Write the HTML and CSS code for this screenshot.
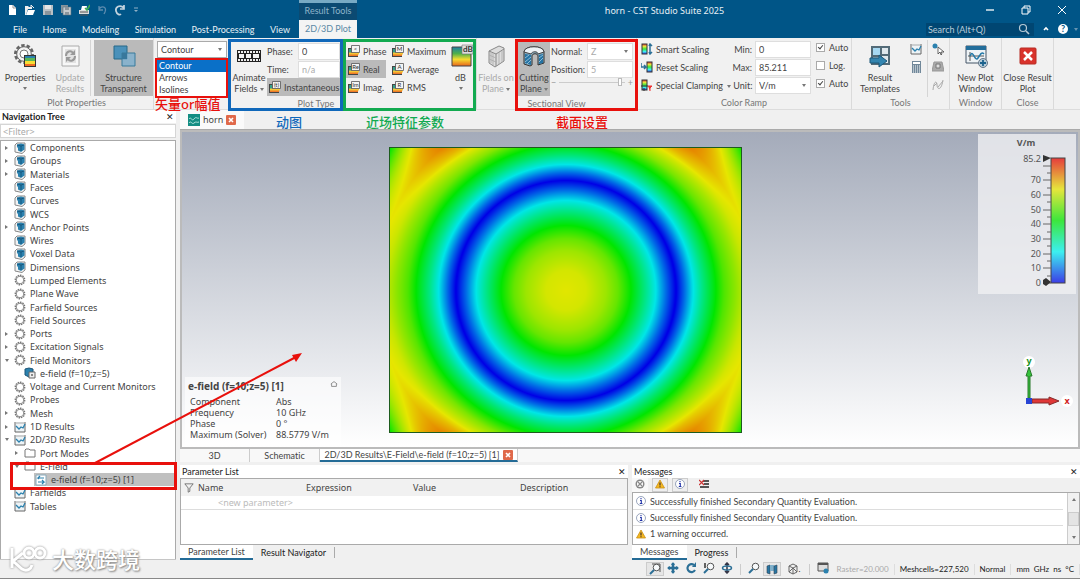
FILE: index.html
```html
<!DOCTYPE html>
<html lang="en">

<head>
  <meta charset="UTF-8">
  <meta name="viewport" content="width=device-width, initial-scale=1.0">
  <title>horn - CST Studio Suite 2025</title>
  <link rel="stylesheet" href="styles.css">
</head>

<body>
  <!-- shared icons -->
  <svg class="sprite" width="0" height="0">
    <defs>
      <linearGradient id="ramp" x1="0" y1="0" x2="0" y2="1">
        <stop offset="0" stop-color="#e63c3c" />
        <stop offset=".25" stop-color="#e6e63c" />
        <stop offset=".5" stop-color="#3ce63c" />
        <stop offset=".75" stop-color="#3cf0f0" />
        <stop offset="1" stop-color="#3c3ce6" />
      </linearGradient>
      <linearGradient id="dbramp" x1="0" y1="0" x2="0" y2="1">
        <stop offset="0" stop-color="#1d7fa6" />
        <stop offset=".35" stop-color="#4fb04a" />
        <stop offset=".65" stop-color="#f4dc30" />
        <stop offset="1" stop-color="#e8641b" />
      </linearGradient>
    </defs>
    <symbol id="cube" viewBox="0 0 12 12">
      <path d="M1 3l2-2h8v8l-3 2.500-7-1.500z" fill="#f4f4f4" stroke="#888" />
      <path d="M3 2.500l4-1 3.500 1v5L7 10 4 8.500V6L3 5z" fill="#2b81ae" />
      <path d="M3 3l4 1 3-1M7 4v5" stroke="#124e72" fill="none" stroke-width=".8" />
    </symbol>
    <symbol id="gear" viewBox="0 0 12 12">
      <circle cx="6" cy="6" r="4.700" fill="none" stroke="#777" stroke-width="1.400" stroke-dasharray="1.500 .9" />
      <circle cx="6" cy="6" r="3.800" fill="#fff" stroke="#888" stroke-width="1" />
    </symbol>
    <symbol id="chart" viewBox="0 0 12 12">
      <path d="M1 1v10h10V1" fill="#edf3f6" stroke="#666" />
      <path d="M1 2h10" stroke="#aaa" />
      <path d="M2 5l3 3 2-2 2 1 2-4" fill="none" stroke="#2b81ae" stroke-width="1.300" />
    </symbol>
    <symbol id="folder" viewBox="0 0 12 12">
      <path d="M1 10V3l1-1h3l1 1h5v7z" fill="#fff" stroke="#777" />
    </symbol>
    <symbol id="monitor" viewBox="0 0 12 12">
      <path d="M1 2l4-1 4 1v7l-4 1-4-2z" fill="#2b81ae" stroke="#1a5578" />
      <path d="M5 5h6v6H5z" fill="#eee" stroke="#666" />
      <path d="M7 9V7h2v2z" fill="#888" />
    </symbol>
    <symbol id="field" viewBox="0 0 12 12">
      <path d="M1 1h10v10H1z" fill="#fff" stroke="#8ab" />
      <path d="M9 4H3l2-2M3 4l1 1M3 8h6L7 6M9 8l-2 2" fill="none" stroke="#2b81ae" stroke-width="1.200" />
    </symbol>
    <symbol id="stack" viewBox="0 0 12 12">
      <path d="M0 3h4v9H0z" fill="#444" />
      <path d="M1 4h2v4H1z" fill="#35a08c" />
      <path d="M0 11.500h10" stroke="#444" />
      <path d="M1 9h9v2H1z" fill="#ee7b28" />
      <path d="M1 7.500h10v2H1z" fill="#f5c736" />
      <path d="M3.500 .5h8v7h-8z" fill="#f4f4f4" stroke="#555" stroke-width=".8" />
    </symbol>
    <symbol id="close" viewBox="0 0 10 10">
      <rect width="10" height="10" rx="1" fill="#e0694a" />
      <path d="M3 3l4 4M7 3L3 7" stroke="#fff" stroke-width="1.600" />
    </symbol>
    <symbol id="info" viewBox="0 0 10 10">
      <circle cx="5" cy="5" r="4.500" fill="#fff" stroke="#8291ad" stroke-width=".8" />
      <path d="M4 4.500h1.300v3M3.800 7.500h2.600M5 2v1.300" stroke="#2133a8" stroke-width="1.100" fill="none" />
    </symbol>
    <symbol id="warn" viewBox="0 0 10 10">
      <path d="M5 1l4.500 8h-9z" fill="#f5b81f" stroke="#c98f16" stroke-width=".8" />
      <path d="M5 3.500v3M5 7.200v1" stroke="#433" stroke-width="1.200" />
    </symbol>
    <symbol id="lens" viewBox="0 0 12 12">
      <circle cx="7.500" cy="4.500" r="3.300" fill="#f7fafc" stroke="#555" />
      <path d="M5 7l-4 4" stroke="#2b6f96" stroke-width="2" />
    </symbol>
    <symbol id="scale" viewBox="0 0 12 12">
      <rect x="1" y="1" width="5" height="10" fill="url(#ramp)" stroke="#333" />
    </symbol>
  </svg>

  <header>
    <div class="titlebar">
      <div class="quick">
        <button type="button" aria-label="New"><svg viewBox="0 0 12 12"><path d="M3 1h4l3 3v7H3z" fill="#fff" /><path d="M7 1v3h3" fill="none" stroke="#999" /></svg></button>
        <button type="button" aria-label="Open"><svg viewBox="0 0 12 12"><path d="M1 2h3l1 1h3v2H4l-2 6H1z" fill="#eee" /><path d="M4 6h7l-2 5H2z" fill="#fff" /><path d="M7 4V1l3 3" stroke="#eee" fill="none" /></svg></button>
        <button type="button" aria-label="Save"><svg viewBox="0 0 12 12"><path d="M1 1h10v10H1z" fill="#b9c0c5" /><path d="M3 1h6v4H3z" fill="#e5e5e5" /><path d="M3 7h6v4H3z" fill="#8b959c" /></svg></button>
        <button type="button" aria-label="Save all"><svg viewBox="0 0 12 12"><path d="M1 1h7v8H1z" fill="#87949c" /><path d="M3 3h8v8H3z" fill="#c5cacd" stroke="#56707f" stroke-width=".6" /><path d="M5 3h4v3H5zM5 8h4v3H5z" fill="#8b959c" /></svg></button>
        <button type="button" aria-label="Print"><svg viewBox="0 0 12 12"><path d="M1 6h10v4H1z" fill="#ddd" /><path d="M3 6l1-4h5l-1 4z" fill="#fff" /><path d="M7 4l2 2 3-5" stroke="#3cac4d" stroke-width="1.500" fill="none" /><path d="M2 11h8M2 8h8" stroke="#555" /></svg></button>
        <button type="button" aria-label="Undo"><svg viewBox="0 0 12 12"><path d="M3 2v4h4M3 5c3-4 8-2 6 3L8 10" fill="none" stroke="#5d8caf" stroke-width="1.300" /></svg></button>
        <button type="button" aria-label="Redo"><svg viewBox="0 0 12 12"><path d="M10 1v4H6M10 4C6 0 1 3 2 7s4 4 5 3" fill="none" stroke="#c4d4df" stroke-width="1.700" /></svg></button>
        <button type="button" class="narrow" aria-label="Customize"><svg viewBox="0 0 12 12"><path d="M4 4h4" stroke="#8fb0c6" /><path d="M4 6h4L6 8z" fill="#8fb0c6" /></svg></button>
      </div>
      <div class="context">Result Tools</div>
      <h1>horn - CST Studio Suite 2025</h1>
      <div class="window-buttons">
        <button type="button" aria-label="Minimize"><svg viewBox="0 0 12 12"><path d="M2 6h8" stroke="#fff" stroke-width="1.300" /></svg></button>
        <button type="button" aria-label="Restore"><svg viewBox="0 0 12 12"><path d="M2 4h6v6H2zM4 4V2h6v6H8" fill="none" stroke="#fff" /></svg></button>
        <button type="button" aria-label="Close"><svg viewBox="0 0 12 12"><path d="M2 2l8 8M10 2l-8 8" stroke="#fff" /></svg></button>
      </div>
    </div>
    <nav class="menu">
      <div class="menu-items">
        <a href="#">File</a>
        <a href="#">Home</a>
        <a href="#">Modeling</a>
        <a href="#">Simulation</a>
        <a href="#">Post-Processing</a>
        <a href="#">View</a>
      </div>
      <a href="#" class="current">2D/3D Plot</a>
      <div class="search">
        <input type="text" placeholder="Search (Alt+Q)" aria-label="Search">
        <svg viewBox="0 0 12 12"><circle cx="5" cy="5" r="3.500" fill="none" stroke="#b7cad6" stroke-width="1.200" /><path d="M8 8l3 3" stroke="#b7cad6" stroke-width="1.600" /></svg>
      </div>
      <button type="button" aria-label="Collapse ribbon"><svg viewBox="0 0 12 12"><path d="M4 7l2-2 2 2" fill="none" stroke="#fff" stroke-width="1.600" /></svg></button>
      <button type="button" class="help" aria-label="Help">?</button>
      <i class="arrow pale"></i>
    </nav>
  </header>

  <section class="ribbon">
    <div class="group properties">
      <div class="tools">
        <button type="button" class="big">
          <svg viewBox="0 0 24 24"><circle cx="11" cy="10" r="8.500" fill="none" stroke="#666" stroke-width="3" stroke-dasharray="3.300 2" /><circle cx="11" cy="10" r="7.300" fill="#f4f4f4" stroke="#666" /><circle cx="11" cy="10" r="4" fill="#fff" stroke="#777" /><path d="M11 11h12v12H11z" fill="#333" /><path d="M12 12h10v2H12z" fill="#2b81ae" /><path d="M12 14h10v3H12z" fill="#59b757" /><path d="M12 17h10v3H12z" fill="#f7de35" /><path d="M12 20h10v2H12z" fill="#ef6d25" /></svg>
          <span>Properties</span><i class="arrow"></i>
        </button>
        <button type="button" class="big off">
          <svg viewBox="0 0 24 24"><path d="M4 2h17v20H4z" fill="#f7f7f7" stroke="#aaa" /><path d="M7 5h11v14H7z" fill="#e2e2e2" /><path d="M8 12c0-5 5-6 7-3M17 12c0 5-5 6-7 3" fill="none" stroke="#999" stroke-width="2" /><path d="M17 6v5h-5zM8 18v-5h5z" fill="#999" /></svg>
          <span>Update<br>Results</span>
        </button>
        <button type="button" class="big on transparent">
          <svg viewBox="0 0 24 24"><path d="M2 2h13v13H2z" fill="#4a91ba" stroke="#266888" /><path d="M10 9h13v13H10z" fill="#79afd0" fill-opacity=".75" stroke="#397a9b" /><path d="M10 9h5v6h-5z" fill="#38789c" /></svg>
          <span>Structure<br>Transparent</span>
        </button>
      </div>
      <h2>Plot Properties</h2>
    </div>

    <div class="group plot-type">
      <div class="tools">
        <div class="combo">
          <select aria-label="Plot style">
            <option>Contour</option>
            <option>Arrows</option>
            <option>Isolines</option>
          </select>
          <i class="arrow"></i>
          <ul class="options">
            <li class="picked">Contour</li>
            <li>Arrows</li>
            <li>Isolines</li>
          </ul>
        </div>
        <div class="marked blue">
          <button type="button" class="big">
            <svg viewBox="0 0 24 24"><path d="M0 6h24v12H0z" fill="#222" /><path d="M1 8h22M1 16h22" stroke="#eee" stroke-width="2" stroke-dasharray="2 1" /><path d="M2 10h5v4H2zM9 10h5v4H9zM16 10h6v4h-6z" fill="#f4f4f4" /></svg>
            <span>Animate<br>Fields <i class="arrow"></i></span>
          </button>
          <div class="fields">
            <label for="phase">Phase:</label><input id="phase" type="text" value="0">
            <label for="time">Time:</label><input id="time" type="text" value="n/a" disabled>
            <button type="button" class="small on wide"><svg viewBox="0 0 12 12"><use href="#stack" /><text x="7.500" y="6" class="mini">(t)</text></svg>Instantaneous</button>
          </div>
        </div>
        <div class="marked green">
          <div class="rows first">
            <button type="button" class="small"><svg viewBox="0 0 12 12"><use href="#stack" /><text x="7.500" y="6" class="mini">&lt;</text></svg>Phase</button>
            <button type="button" class="small on"><svg viewBox="0 0 12 12"><use href="#stack" /><text x="7.500" y="6" class="mini">Re</text></svg>Real</button>
            <button type="button" class="small"><svg viewBox="0 0 12 12"><use href="#stack" /><text x="7.500" y="6" class="mini">Im</text></svg>Imag.</button>
          </div>
          <div class="rows">
            <button type="button" class="small"><svg viewBox="0 0 12 12"><use href="#stack" /><text x="7.500" y="6" class="mini">M</text></svg>Maximum</button>
            <button type="button" class="small"><svg viewBox="0 0 12 12"><use href="#stack" /><text x="7.500" y="6" class="mini">A</text></svg>Average</button>
            <button type="button" class="small"><svg viewBox="0 0 12 12"><use href="#stack" /><text x="7.500" y="6" class="mini">R</text></svg>RMS</button>
          </div>
          <button type="button" class="big">
            <svg viewBox="0 0 24 24"><path d="M3 3h19v19H3z" fill="url(#dbramp)" stroke="#444" /><path d="M13 1h11v9H13z" fill="#ddd" stroke="#777" stroke-width=".6" /><text x="14" y="8" font-size="8" font-weight="bold" fill="#333">dB</text></svg>
            <span>dB</span><i class="arrow"></i>
          </button>
        </div>
      </div>
      <h2>Plot Type</h2>
    </div>

    <div class="group sectional">
      <div class="tools">
        <button type="button" class="big off">
          <svg viewBox="0 0 24 24"><path d="M5 7l10-5 5 2v13l-9 6-6-4z" fill="#ddd" stroke="#888" /><path d="M5 7l7 3v12M12 10l8-5" fill="none" stroke="#888" /><path d="M7 8v11M9 9v12M5 11l7 3M5 15l7 3M15 8v12M18 7v11" stroke="#aaa" stroke-width=".8" /></svg>
          <span>Fields on<br>Plane <i class="arrow"></i></span>
        </button>
        <div class="marked red">
          <button type="button" class="big on cutting">
            <svg viewBox="0 0 24 24"><path d="M2 8c0-7 20-7 20 0v11l-6 2V12c0-3-6-3-6 0v9l-2 1-6-2z" fill="#8badbf" stroke="#333" /><path d="M2 8c0-7 20-7 20 0l-6 2c0-3-6-3-7 0z" fill="#eef3f6" stroke="#444" /><path d="M3 10l6 1v10l-6-2zM17 11l4-1v9l-4 1z" fill="#2473a3" /><path d="M3 14l4-3M3 18l6-5M5 20l4-4M17 14l4-3M17 18l4-4" stroke="#a8cfe4" stroke-width=".8" /></svg>
            <span>Cutting<br>Plane <i class="arrow"></i></span>
          </button>
          <div class="fields section-fields">
            <label for="normal">Normal:</label>
            <div class="combo"><select id="normal" disabled><option>Z</option></select><i class="arrow"></i></div>
            <label for="position">Position:</label><input id="position" type="text" value="5" disabled>
            <div class="slider"><span>−</span><input type="range" value="95" aria-label="Position" disabled><span>+</span></div>
          </div>
        </div>
      </div>
      <h2>Sectional View</h2>
    </div>

    <div class="group color-ramp">
      <div class="tools">
        <div class="rows">
          <button type="button" class="small"><svg viewBox="0 0 12 12"><use href="#scale" /><path d="M9 2v8M8 3l1-2 2 2M8 9l1 2 2-2" stroke="#2b6f96" stroke-width="1.500" fill="none" /></svg>Smart Scaling</button>
          <button type="button" class="small"><svg viewBox="0 0 12 12"><use href="#scale" x="5" /><path d="M0 2v4h5L3 4M5 6L3 8" stroke="#2b6f96" stroke-width="1.500" fill="none" /></svg>Reset Scaling</button>
          <button type="button" class="small"><svg viewBox="0 0 12 12"><use href="#scale" /><path d="M0 7h7M3 9v3" stroke="#333" /><path d="M7 7h4L9 9v3" fill="#e33" stroke="#e33" /></svg>Special Clamping</button>
        </div>
        <div class="fields ramp-fields">
          <label for="min">Min:</label><input id="min" type="text" value="0">
          <label for="max">Max:</label><input id="max" type="text" value="85.211">
          <label for="unit"><i class="arrow"></i> Unit:</label>
          <div class="combo"><select id="unit"><option>V/m</option></select><i class="arrow"></i></div>
        </div>
        <div class="rows checks">
          <label><input type="checkbox" checked>Auto</label>
          <label><input type="checkbox">Log.</label>
          <label><input type="checkbox" checked>Auto</label>
        </div>
      </div>
      <h2>Color Ramp</h2>
    </div>

    <div class="group result-tools">
      <div class="tools">
        <button type="button" class="big">
          <svg viewBox="0 0 24 24"><path d="M3 2h19v19H3z" fill="#536b78" /><path d="M5 4h7v7H5z" fill="#a6d8f2" /><path d="M14 4h6v6h-6zM14 12h6v7h-6z" fill="#dfe8ed" /><path d="M5 13h7v6H5z" fill="#a9bdc8" /><path d="M2 14h9v-3l8 6-8 6v-4H2z" fill="#3385b0" stroke="#1c587b" /></svg>
          <span>Result<br>Templates</span>
        </button>
        <div class="rows icons">
          <button type="button" class="small" aria-label="Result curve"><svg><use href="#chart" /></svg></button>
          <button type="button" class="small" aria-label="Calculator"><svg viewBox="0 0 12 12"><path d="M2 0h9v12H2z" fill="#71889a" /><path d="M3 2h7" stroke="#fff" stroke-width="2" /><path d="M3 5h7M3 7h7M3 9h7M3 11h7" stroke="#fff" stroke-dasharray="1 1" /></svg></button>
        </div>
        <div class="rows icons divided">
          <button type="button" class="small" aria-label="Pick"><svg viewBox="0 0 12 12"><circle cx="3" cy="3" r="2.500" fill="#2b81ae" /><path d="M6 4v7l2-2 1 3 1-1-1-2h3z" fill="#fff" stroke="#444" stroke-width=".8" /></svg></button>
          <button type="button" class="small" aria-label="Bounding box"><svg viewBox="0 0 12 12"><path d="M2 1h8l2 9H0z" fill="#aaa" stroke="#999" /><path d="M4 3h4v4H4z" fill="#ddd" stroke="#777" /></svg></button>
          <button type="button" class="small" aria-label="Curve"><svg viewBox="0 0 12 12"><path d="M1 11C2 1 5 2 5 6s4 7 6-5M5 4l-3 3M6 8l5-6" fill="none" stroke="#aaa" /></svg></button>
        </div>
      </div>
      <h2>Tools</h2>
    </div>

    <div class="group single">
      <div class="tools">
        <button type="button" class="big">
          <svg viewBox="0 0 24 24"><path d="M2 2h20v17H2z" fill="#eef3f6" stroke="#456" /><path d="M2 2h20v4H2z" fill="#236e9b" /><path d="M4 12h16M6 8v9" stroke="#555" /><path d="M6 12c3-8 5 7 8 2s4-6 6-4" fill="none" stroke="#2379a8" stroke-width="1.500" /><circle cx="19" cy="19" r="4.500" fill="#b5cbd8" stroke="#678" /><path d="M19 16v6M16 19h6" stroke="#1d638d" stroke-width="1.800" /></svg>
          <span>New Plot<br>Window</span>
        </button>
      </div>
      <h2>Window</h2>
    </div>
    <div class="group single">
      <div class="tools">
        <button type="button" class="big">
          <svg viewBox="0 0 24 24"><rect x="4" y="4" width="16" height="16" rx="1" fill="#d9322b" stroke="#b72c24" /><path d="M8 8l8 8M16 8l-8 8" stroke="#fff" stroke-width="2.500" /></svg>
          <span>Close Result<br>Plot</span>
        </button>
      </div>
      <h2>Close</h2>
    </div>
  </section>

  <main>
    <aside>
      <div class="panel-title"><h2>Navigation Tree</h2><button type="button" aria-label="Close tree">✕</button></div>
      <input class="filter" type="text" placeholder="&lt;Filter&gt;" aria-label="Filter">
      <div class="tree-box">
        <ul class="tree">
          <li class="closed"><svg><use href="#cube" /></svg>Components</li>
          <li class="closed"><svg><use href="#cube" /></svg>Groups</li>
          <li class="closed"><svg><use href="#cube" /></svg>Materials</li>
          <li><svg><use href="#cube" /></svg>Faces</li>
          <li><svg><use href="#cube" /></svg>Curves</li>
          <li><svg><use href="#cube" /></svg>WCS</li>
          <li class="closed"><svg><use href="#cube" /></svg>Anchor Points</li>
          <li><svg><use href="#cube" /></svg>Wires</li>
          <li><svg><use href="#cube" /></svg>Voxel Data</li>
          <li><svg><use href="#cube" /></svg>Dimensions</li>
          <li><svg><use href="#gear" /></svg>Lumped Elements</li>
          <li><svg><use href="#gear" /></svg>Plane Wave</li>
          <li><svg><use href="#gear" /></svg>Farfield Sources</li>
          <li><svg><use href="#gear" /></svg>Field Sources</li>
          <li class="closed"><svg><use href="#gear" /></svg>Ports</li>
          <li class="closed"><svg><use href="#gear" /></svg>Excitation Signals</li>
          <li class="open"><svg><use href="#gear" /></svg>Field Monitors</li>
          <li class="level2"><svg><use href="#monitor" /></svg>e-field (f=10;z=5)</li>
          <li><svg><use href="#gear" /></svg>Voltage and Current Monitors</li>
          <li><svg><use href="#gear" /></svg>Probes</li>
          <li class="closed"><svg><use href="#gear" /></svg>Mesh</li>
          <li class="closed"><svg><use href="#chart" /></svg>1D Results</li>
          <li class="open"><svg><use href="#chart" /></svg>2D/3D Results</li>
          <li class="closed level2"><svg><use href="#folder" /></svg>Port Modes</li>
          <li class="open level2"><svg><use href="#folder" /></svg>E-Field</li>
          <li class="level3"><svg><use href="#field" /></svg>e-field (f=10;z=5) [1]</li>
          <li><svg><use href="#chart" /></svg>Farfields</li>
          <li><svg><use href="#chart" /></svg>Tables</li>
        </ul>
      </div>
    </aside>

    <div class="work">
      <div class="documents">
        <button type="button" class="document">
          <svg viewBox="0 0 12 12"><path d="M0 0h12v12H0z" fill="#148d83" /><path d="M1 5c2-3 3 3 5 0s3 0 5-1M1 9c2-3 3 2 5 0s3 0 5-1" fill="none" stroke="#b5e6df" /></svg>
          horn
          <svg class="x"><use href="#close" /></svg>
        </button>
      </div>

      <div class="plot">
        <div class="info">
          <h3>e-field (f=10;z=5) [1] <svg viewBox="0 0 10 8"><path d="M1 4l4-3 4 3M2 4v3h6V4" fill="none" stroke="#777" /></svg></h3>
          <dl>
            <dt>Component</dt><dd>Abs</dd>
            <dt>Frequency</dt><dd>10 GHz</dd>
            <dt>Phase</dt><dd>0 °</dd>
            <dt>Maximum (Solver)</dt><dd>88.5779 V/m</dd>
          </dl>
        </div>
        <canvas id="field-plot" width="353" height="286"></canvas>
        <div class="keys">
          <svg class="legend" viewBox="0 0 98 160">
            <text x="48" y="12" class="unit" text-anchor="middle">V/m</text>
            <rect x="73" y="24" width="14" height="125" fill="url(#ramp)" stroke="#444" />
            <g id="ticks"></g>
            <path d="M65 21l8 3-8 4z" fill="#333" />
            <path d="M65 146l3-2 5 4-5 4-3-2z" fill="#333" />
          </svg>
          <svg class="axes" viewBox="0 0 60 60">
            <circle cx="13" cy="8" r="6" fill="#fff" /><circle cx="51" cy="47" r="6" fill="#fff" />
            <path d="M12 44V22h-2l3-9 3 9h-2v22z" fill="#35c43c" stroke="#28782b" />
            <path d="M16 45h17v-2l10 4-10 4v-2H16z" fill="#df3737" stroke="#862b2b" />
            <rect x="10" y="44" width="6" height="6" fill="#2744d4" />
            <text x="13" y="10" text-anchor="middle" fill="#16911d">y</text>
            <text x="51" y="50" text-anchor="middle" fill="#d21f1f">x</text>
          </svg>
        </div>
      </div>

      <div class="views">
        <button type="button">3D</button>
        <button type="button">Schematic</button>
        <button type="button" class="selected">2D/3D Results\E-Field\e-field (f=10;z=5) [1] <svg><use href="#close" /></svg></button>
      </div>

      <div class="dock">
        <section class="parameters">
          <div class="panel-title"><h2>Parameter List</h2><button type="button" aria-label="Close parameters">✕</button></div>
          <div class="box">
            <table>
              <tr>
                <th scope="col"><svg viewBox="0 0 12 12"><path d="M1 1h10L7 6v4l-2 1V6z" fill="none" stroke="#666" /></svg>Name</th>
                <th scope="col">Expression</th>
                <th scope="col">Value</th>
                <th scope="col">Description</th>
              </tr>
              <tr>
                <td>&lt;new parameter&gt;</td>
                <td></td>
                <td></td>
                <td></td>
              </tr>
            </table>
          </div>
          <div class="tabs"><button type="button" class="selected">Parameter List</button><button type="button">Result Navigator</button></div>
        </section>

        <section class="messages">
          <div class="panel-title"><h2>Messages</h2><button type="button" aria-label="Close messages">✕</button></div>
          <div class="filters">
            <button type="button" aria-label="Errors"><svg viewBox="0 0 10 10"><circle cx="5" cy="5" r="4.500" fill="#888" /><circle cx="5" cy="5" r="3" fill="#fff" /><path d="M3 3l4 4M7 3L3 7" stroke="#888" stroke-width="1.200" /></svg></button>
            <button type="button" class="on" aria-label="Warnings"><svg><use href="#warn" /></svg></button>
            <button type="button" class="on" aria-label="Infos"><svg><use href="#info" /></svg></button>
            <button type="button" aria-label="Clear"><svg viewBox="0 0 10 10"><path d="M4 2h6M5 5h5M1 8h9" stroke="#222" stroke-width="1.500" /><path d="M0 1l5 5M5 1L0 6" stroke="#c33" stroke-width="1.200" /></svg></button>
          </div>
          <div class="box log">
            <ul>
              <li><svg><use href="#info" /></svg>Successfully finished Secondary Quantity Evaluation.</li>
              <li><svg><use href="#info" /></svg>Successfully finished Secondary Quantity Evaluation.</li>
              <li><svg><use href="#warn" /></svg>1 warning occurred.</li>
            </ul>
            <div class="scrollbar"><i class="arrow up"></i><span></span><i class="arrow"></i></div>
          </div>
          <div class="tabs"><button type="button" class="selected">Messages</button><button type="button">Progress</button></div>
        </section>
      </div>
    </div>
  </main>

  <footer>
    <button type="button" class="on" aria-label="Zoom window"><svg viewBox="0 0 12 12"><path d="M3 1h8v8" fill="none" stroke="#555" /><use href="#lens" /></svg></button>
    <button type="button" aria-label="Pan"><svg viewBox="0 0 12 12"><path d="M6 1v10M1 6h10" stroke="#2b6f96" stroke-width="2.500" /><path d="M6 0l2 3H4zM6 12l2-3H4zM0 6l3-2v4zM12 6L9 4v4z" fill="#2b6f96" /></svg></button>
    <button type="button" aria-label="Rotate"><svg viewBox="0 0 12 12"><path d="M9 3a4 4 0 1 0 1 5" fill="none" stroke="#2b6f96" stroke-width="2.200" /><path d="M7 5h4V0z" fill="#2b6f96" /></svg></button>
    <button type="button" aria-label="Dynamic zoom"><svg viewBox="0 0 12 12"><use href="#lens" /><path d="M2 1v5" stroke="#333" stroke-width="1.500" /></svg></button>
    <button type="button" aria-label="Rotate in plane"><svg viewBox="0 0 12 12"><path d="M6 1v10M4 3l2-2 2 2M4 9l2 2 2-2" fill="none" stroke="#334" stroke-width="1.500" /><ellipse cx="6" cy="6" rx="4.500" ry="2" fill="none" stroke="#2b6f96" stroke-width="1.500" /></svg></button>
    <hr>
    <button type="button" aria-label="Zoom"><svg><use href="#lens" /></svg></button>
    <button type="button" class="on" aria-label="Cutting plane"><svg viewBox="0 0 12 12"><path d="M1 3l3-1v9l-3-1z" fill="#2776a3" stroke="#345" stroke-width=".6" /><path d="M4 2h4v6H4z" fill="#7fb0cb" /><path d="M8 3l3-1v8l-3 1z" fill="#2776a3" stroke="#345" stroke-width=".6" /></svg></button>
    <button type="button" class="mode" aria-label="View mode"><svg viewBox="0 0 12 12"><path d="M2 3l4-2 4 2v6l-4 2-4-2zM2 3l4 2 4-2M6 5v6M2 9l4-4 4 4" fill="none" stroke="#666" /></svg>.</button>
    <hr>
    <button type="button" aria-label="Mesh settings"><svg viewBox="0 0 12 12"><path d="M1 1h10v8H1z" fill="#ddd" stroke="#555" /><path d="M1 2h10" stroke="#555" stroke-width="2" /><circle cx="9" cy="9" r="2.500" fill="#2b81ae" /></svg></button>
    <span class="off">Raster=20.000</span>
    <span>Meshcells=227,520</span>
    <span>Normal</span>
    <span class="units">mm&nbsp; GHz&nbsp; ns&nbsp; °C</span>
  </footer>

  <!-- notes laid over the window -->
  <p class="note style-note">矢量or幅值</p>
  <p class="note animate-note">动图</p>
  <p class="note values-note">近场特征参数</p>
  <p class="note section-note">截面设置</p>
  <svg class="pointer" viewBox="0 0 300 150">
    <path d="M85 112L286 6" stroke="#e8100c" stroke-width="2" />
    <path d="M292 2l-6 9-4-7z" fill="#e8100c" />
  </svg>
  <div class="tree-mark"></div>
  <div class="watermark">
    <svg viewBox="0 0 40 28"><path d="M3 3v20M14 8L4 16l9 8c5 3 9 0 10-4" fill="none" /><circle cx="20" cy="8" r="5" fill="none" /><circle cx="31" cy="8" r="5" fill="none" /></svg>
    大数跨境
  </div>

  <script>
    const canvas = document.querySelector('#field-plot');
    const ctx = canvas.getContext('2d');
    const w = canvas.width;
    const h = canvas.height;

    // [radius, relative amplitude]
    const profile = [
      [0, .745], [20, .73], [40, .67], [52, .61], [65, .5], [78, .37], [90, .25], [100, .12], [110, 0],
      [118, .12], [126, .25], [136, .38], [146, .5], [158, .65], [169, .75],
      [178, .84], [189, .93], [207, 1], [230, 1.08]
    ];
    const ramp = [[0, 0, 230], [0, 230, 230], [0, 230, 0], [230, 230, 0], [230, 0, 0]];

    function amplitude(x, y) {
      const r = Math.hypot(x, y);
      let i = 1;
      while (i < profile.length - 1 && profile[i][0] < r) i++;
      const [r0, v0] = profile[i - 1];
      const [r1, v1] = profile[i];
      const v = v0 + (v1 - v0) * (r - r0) / (r1 - r0);
      // the field drops again towards the side walls
      const wall = .58 * Math.pow(Math.abs(x) / 176, 6) * (.22 + .78 * Math.pow(Math.abs(y) / 143, 3));
      return Math.max(0, Math.min(.999, v - wall));
    }

    const image = ctx.createImageData(w, h);
    for (let y = 0; y < h; y++) {
      for (let x = 0; x < w; x++) {
        const v = amplitude(x - w / 2, y - h / 2) * 4;
        const n = Math.floor(v);
        const p = (y * w + x) * 4;
        for (let c = 0; c < 3; c++) {
          image.data[p + c] = ramp[n][c] + (ramp[n + 1][c] - ramp[n][c]) * (v - n);
        }
        image.data[p + 3] = 255;
      }
    }
    ctx.putImageData(image, 0, 0);
    ctx.strokeStyle = '#1d5c1d';
    ctx.strokeRect(.5, .5, w - 1, h - 1);

    // legend ticks
    let ticks = '<text x="63" y="28" text-anchor="end">85.2</text>';
    for (let v = 0; v <= 80; v += 5) {
      const y = Math.round(149 - v / 85.2 * 125);
      ticks += `<path d="M${v % 10 ? 69 : 65} ${y}H73" stroke="#666"/>`;
      if (v % 10 === 0 && v < 80) ticks += `<text x="63" y="${y + 3}" text-anchor="end">${v}</text>`;
    }
    document.querySelector('#ticks').innerHTML = ticks;
  </script>
</body>

</html>
```
FILE: styles.css
```css
* {
  box-sizing: border-box;
}

body {
  position: relative;
  display: flex;
  flex-direction: column;
  height: 100vh;
  margin: 0;
  overflow: hidden;
  background: #f0f0f0;
  color: #444;
  font: 9px/11px "Noto Sans", "Noto Sans CJK SC", sans-serif;
  font-variant-ligatures: none;
}

header,
.ribbon,
.panel-title,
.views,
.tabs,
.log,
footer {
  font-family: Lato, "Noto Sans", sans-serif;
}

h1,
h2,
h3,
p,
ul,
dl,
dd {
  margin: 0;
  padding: 0;
  font-size: inherit;
  font-weight: normal;
}

ul {
  list-style: none;
}

button,
input,
select {
  margin: 0;
  padding: 0;
  border: 0;
  background: none;
  color: inherit;
  font: inherit;
  font-variant-ligatures: none;
}

a {
  color: inherit;
  text-decoration: none;
}

svg {
  flex: none;
  width: 12px;
  height: 12px;
}

.sprite {
  position: absolute;
  width: 0;
  height: 0;
}

.arrow {
  display: inline-block;
  flex: none;
  border: 2px solid transparent;
  border-top: 3px solid #777;
  border-bottom: 0;
  vertical-align: middle;
}

.arrow.up {
  border-top: 0;
  border-bottom: 3px solid #777;
}

/* title bar and menu */
header {
  background: #005587;
  color: #e8f0f5;
}

.titlebar,
.menu {
  display: flex;
  align-items: center;
  height: 20px;
}

.menu {
  height: 18px;
}

.quick {
  display: flex;
  width: 299px;
  padding-left: 3px;
}

.quick button {
  width: 18px;
  height: 12px;
}

.quick .narrow {
  width: 14px;
}

.context {
  width: 58px;
  height: 20px;
  border-top: 3px solid #78aac4;
  background: #0b4a72;
  color: #8eb4ca;
  line-height: 16px;
  text-align: center;
}

h1 {
  flex: 1;
  font-family: "Noto Sans", sans-serif;
  text-align: center;
}

.window-buttons {
  display: flex;
}

.window-buttons button {
  width: 36px;
  height: 12px;
}

.menu-items {
  display: flex;
  justify-content: space-between;
  width: 299px;
  padding: 0 9px 0 13px;
}

.current {
  align-self: stretch;
  width: 58px;
  background: #f4f4f4;
  color: #5b88a5;
  line-height: 18px;
  text-align: center;
}

.search {
  display: flex;
  align-items: center;
  width: 108px;
  height: 13px;
  margin-left: auto;
  padding: 0 4px 0 2px;
  background: #004672;
}

.search input {
  flex: 1;
  min-width: 0;
}

.search input::placeholder {
  color: #b9cdd9;
}

.menu button {
  width: 12px;
  height: 12px;
  margin-left: 6px;
}

.menu .help {
  width: 10px;
  height: 10px;
  border-radius: 50%;
  background: #fff;
  color: #005587;
  font-weight: bold;
  line-height: 10px;
}

.pale {
  margin: 0 2px 0 6px;
  border-top-color: #6493b0;
}

/* ribbon */
.ribbon {
  display: flex;
  height: 72px;
  border-bottom: 1px solid #dcdcdc;
  background: #f1f1f1;
}

.group {
  display: flex;
  flex: none;
  flex-direction: column;
  padding-top: 2px;
  border-right: 1px solid #dadada;
}

.group h2 {
  color: #777;
  line-height: 12px;
  text-align: center;
}

.tools {
  display: flex;
  height: 58px;
}

.tools > * {
  flex: none;
}

.properties {
  width: 154px;
}

.plot-type {
  width: 323px;
  padding-left: 2px;
}

.sectional {
  width: 160px;
}

.color-ramp {
  width: 215px;
}

.result-tools {
  width: 98px;
}

.single {
  width: 52px;
}

.big {
  display: flex;
  flex-direction: column;
  align-items: center;
  height: 56px;
  padding-top: 4px;
  white-space: nowrap;
}

.big > svg {
  width: 24px;
  height: 24px;
  margin-bottom: 4px;
}

.big > .arrow {
  margin-top: 4px;
}

.properties .big {
  width: 50px;
}

.properties .off {
  width: 41px;
  border-right: 1px solid #d5d5d5;
}

.properties .transparent {
  width: 59px;
  margin-left: 3px;
}

.on {
  background: #bababa;
}

.off {
  color: #aaa;
}

.single .big {
  width: 100%;
}

.small {
  display: flex;
  align-items: center;
  gap: 3px;
  height: 18px;
  padding: 0 2px;
  white-space: nowrap;
}

.mini {
  fill: #333;
  font-size: 6px;
  text-anchor: middle;
}

.rows {
  display: flex;
  flex-direction: column;
}

.fields {
  display: grid;
  grid-template-columns: 31px 42px;
  grid-auto-rows: 18px;
  align-items: center;
}

.fields input[type="text"],
.combo {
  width: 100%;
  height: 17px;
  padding-left: 3px;
  border: 1px solid #dedede;
  background: #fff;
}

.fields input:disabled,
.combo select:disabled {
  color: #aaa;
  opacity: 1;
}

.combo {
  position: relative;
  display: flex;
  align-items: center;
  padding: 0 4px 0 0;
}

.combo select {
  flex: 1;
  min-width: 0;
  padding-left: 3px;
  appearance: none;
}

.wide {
  grid-column: span 2;
}

.plot-type .tools > .combo {
  width: 70px;
  margin: 1px 1px 0;
  border-color: #aaa;
}

.options {
  position: absolute;
  z-index: 2;
  top: 16px;
  left: -3px;
  width: 73px;
  border: 2px solid #e8100c;
  background: #fff;
  line-height: 12px;
}

.options li {
  padding-left: 2px;
}

.options .picked {
  background: #0a70c8;
  color: #fff;
}

.marked {
  z-index: 1;
  display: flex;
  height: 72px;
  margin-top: -1px;
  border: 3px solid;
}

.marked > * {
  flex: none;
  color: #444;
}

.blue {
  width: 115px;
  border-color: #1068ba;
}

.green {
  width: 133px;
  border-color: #12aa50;
}

.red {
  width: 123px;
  border-color: #e8100c;
}

.marked .big {
  height: 54px;
  padding-top: 2px;
}

.blue .big {
  width: 36px;
}

.green .first {
  width: 44px;
}

.green .first .small {
  margin-right: 4px;
}

.green .rows + .rows {
  width: 58px;
}

.green > .big {
  width: 25px;
}

.sectional .off {
  width: 38px;
}

.cutting {
  width: 32px;
}

.section-fields {
  grid-template-columns: 36px 46px;
  padding-left: 1px;
}

.slider {
  display: flex;
  grid-column: span 2;
  align-items: center;
  align-self: start;
  height: 8px;
  color: #999;
}

.slider input {
  flex: 1;
  min-width: 0;
  height: 1px;
  margin: 0 3px;
  background: #ccc;
  appearance: none;
}

.slider input::-webkit-slider-thumb {
  width: 4px;
  height: 8px;
  border: 1px solid #bbb;
  background: #fff;
  appearance: none;
}

.color-ramp .tools {
  padding-left: 2px;
}

.color-ramp .rows:first-child {
  width: 88px;
}

.ramp-fields {
  grid-template-columns: 28px 56px;
}

.ramp-fields label {
  padding-right: 3px;
  text-align: right;
  white-space: nowrap;
}

.checks {
  padding-left: 5px;
}

.checks label {
  display: flex;
  align-items: center;
  gap: 4px;
  height: 18px;
  padding-bottom: 3px;
}

.checks input {
  width: 9px;
  height: 9px;
  border: 1px solid #aaa;
  background: #fff;
  appearance: none;
}

.checks input:checked::after {
  content: "";
  display: block;
  width: 2px;
  height: 4px;
  margin-left: 2px;
  border: solid #444;
  border-width: 0 1px 1px 0;
  transform: rotate(40deg);
}

.result-tools .big {
  width: 56px;
}

.icons {
  width: 19px;
}

.divided {
  width: 22px;
  border-left: 1px solid #d5d5d5;
}

.divided .small {
  padding-left: 4px;
}

/* main area */
main {
  display: flex;
  flex: 1;
  min-height: 0;
}

aside {
  display: flex;
  flex-direction: column;
  width: 176px;
  border-bottom: 1px solid #c6c6c6;
}

.panel-title {
  display: flex;
  justify-content: space-between;
  height: 13px;
  padding: 0 2px;
  background: #fff;
  color: #222;
  line-height: 13px;
}

aside .panel-title h2 {
  font-weight: bold;
}

.filter {
  height: 14px;
  margin: 1px 0 2px;
  padding-left: 2px;
  border: 1px solid #d5d5d5;
  background: #fff;
}

.filter::placeholder {
  color: #aaa;
}

.tree-box {
  flex: 1;
  border: 1px solid #aaa;
  border-width: 1px 1px 0;
  background: #fff;
}

.tree {
  display: flex;
  flex-direction: column;
  height: 89%;
}

.tree li {
  display: flex;
  flex: 1;
  align-items: center;
  gap: 4px;
  padding-left: 4px;
  white-space: nowrap;
}

.tree li::before {
  content: "";
  width: 5px;
  border: 0 solid transparent;
}

.tree .closed::before {
  width: 0;
  margin-right: 2px;
  border-width: 2px 0 2px 3px;
  border-left-color: #777;
}

.tree .open::before {
  width: 0;
  margin-right: 1px;
  border-width: 3px 2px 0;
  border-top-color: #777;
}

.tree .level2 {
  padding-left: 14px;
}

.tree .level3 {
  padding-left: 25px;
  background: linear-gradient(90deg, #fff 33px, #c0c0c0 33px);
}

.work {
  display: flex;
  flex: 1;
  flex-direction: column;
  min-width: 0;
  margin-left: 4px;
}

.documents {
  height: 20px;
  border-bottom: 1px solid #aaa;
}

.document {
  display: flex;
  align-items: center;
  gap: 3px;
  height: 19px;
  padding: 0 8px;
  background: #fafafa;
}

.document .x,
.views svg {
  width: 10px;
  height: 10px;
}

.plot {
  display: grid;
  flex: 1;
  grid-template-columns: 207px 353px 1fr;
  min-height: 0;
  border: 2px solid #bbb;
  background: linear-gradient(#a4abba, #fff);
}

.plot canvas {
  align-self: center;
  width: 100%;
}

.info {
  align-self: end;
  width: 156px;
  margin: 0 0 2px 3px;
  padding: 3px 3px 5px;
  background: rgba(255, 255, 255, .6);
}

.info h3 {
  display: flex;
  justify-content: space-between;
  margin-bottom: 3px;
  font-size: 10px;
  font-weight: bold;
  line-height: 13px;
}

.info h3 svg {
  width: 8px;
  height: 8px;
}

.info dl {
  display: grid;
  grid-template-columns: 86px 1fr;
  padding-left: 2px;
}

.keys {
  display: flex;
  flex-direction: column;
  align-items: flex-end;
  padding: 2px;
}

.legend {
  width: 98px;
  height: 160px;
  background: rgba(240, 240, 242, .8);
  fill: #555;
}

.unit {
  font-weight: bold;
}

.axes {
  width: 60px;
  height: 60px;
  margin-top: 60px;
  font-weight: bold;
}

.views {
  display: flex;
  height: 13px;
  margin-bottom: 3px;
  background: #f8f8f8;
}

.views button {
  width: 70px;
  border-right: 1px solid #ccc;
}

.views .selected {
  display: flex;
  align-items: center;
  justify-content: center;
  gap: 3px;
  width: 198px;
  border-bottom: 2px solid #246b96;
  background: #fff;
  white-space: nowrap;
}

/* bottom panels */
.dock {
  display: grid;
  grid-template-columns: 1fr 1fr;
  gap: 4px;
}

.dock section {
  display: flex;
  flex-direction: column;
  height: 95px;
}

.box {
  flex: 1;
  min-height: 0;
  border: 1px solid #aaa;
  background: #fff;
}

table {
  width: 100%;
  border-collapse: collapse;
  table-layout: fixed;
}

th {
  height: 17px;
  padding: 0;
  background: #f1f1f1;
  font-weight: normal;
  text-align: left;
}

th:first-child {
  width: 28%;
}

th svg {
  width: 10px;
  height: 10px;
  margin: 0 4px 0 3px;
  vertical-align: middle;
}

td {
  height: 13px;
  padding: 0;
  border-bottom: 1px solid #ddd;
  color: #bbb;
}

td:first-child {
  padding-left: 37px;
}

.tabs {
  display: flex;
  height: 15px;
}

.tabs button {
  padding: 0 8px;
}

.tabs button + button {
  height: 11px;
  margin-top: 2px;
  border-right: 1px solid #aaa;
  color: #222;
}

.tabs .selected {
  border-bottom: 2px solid #246b96;
  background: #fff;
}

.filters {
  display: flex;
  gap: 4px;
  height: 14px;
}

.filters button {
  width: 16px;
  background: #f8f8f8;
}

.filters .on {
  border: 1px solid #ccc;
  background: #eee;
}

.filters button:last-child {
  margin-left: 4px;
  background: none;
}

.filters svg,
.log svg {
  width: 10px;
  height: 10px;
}

.log {
  display: flex;
}

.log ul {
  flex: 1;
}

.log li {
  display: flex;
  align-items: center;
  gap: 4px;
  height: 16px;
  margin-right: 4px;
  padding-left: 3px;
}

.log li + li {
  border-top: 1px solid #ddd;
}

.scrollbar {
  display: flex;
  flex-direction: column;
  align-items: center;
  justify-content: space-between;
  width: 12px;
  padding: 5px 0;
  border-left: 1px solid #ccc;
  background: #f1f1f1;
}

.scrollbar span {
  width: 11px;
  height: 14px;
  border: 1px solid #ccc;
  background: #e4e4e4;
}

/* status bar */
footer {
  display: flex;
  align-items: center;
  justify-content: flex-end;
  height: 19px;
  border-bottom: 1px solid #888;
  color: #222;
  font-size: 8px;
}

footer button {
  width: 18px;
  height: 14px;
}

footer .on {
  border: 1px solid #ccc;
  background: #e6e6e6;
}

footer hr {
  width: 1px;
  height: 11px;
  margin: 0 4px;
  border: 0;
  background: #ccc;
}

footer .mode {
  display: flex;
  align-items: center;
  width: 24px;
  padding-left: 6px;
}

footer span {
  padding: 0 5px;
  border-right: 1px solid #ddd;
}

footer .off {
  color: #aaa;
}

/* notes */
.note {
  position: absolute;
  z-index: 3;
  color: #e8100c;
  font-size: 13px;
  font-weight: 500;
  line-height: 13px;
}

.style-note {
  top: 98px;
  left: 155px;
}

.animate-note {
  top: 116px;
  left: 276px;
  color: #1068ba;
}

.values-note {
  top: 116px;
  left: 366px;
  color: #12aa50;
}

.section-note {
  top: 116px;
  left: 556px;
}

.pointer {
  position: absolute;
  top: 351px;
  left: 10px;
  width: 300px;
  height: 150px;
  pointer-events: none;
}

.tree-mark {
  position: absolute;
  top: 462px;
  left: 10px;
  width: 167px;
  height: 28px;
  border: 3px solid #e8100c;
}

.watermark {
  position: absolute;
  top: 544px;
  left: 9px;
  display: flex;
  align-items: center;
  gap: 3px;
  color: #fff;
  font-size: 22px;
  font-weight: 500;
  line-height: 30px;
  text-shadow: 0 0 2px #888, 1px 1px 2px #888;
}

.watermark svg {
  width: 40px;
  height: 28px;
  stroke: #fff;
  stroke-width: 3;
  filter: drop-shadow(0 0 1px #888);
}
```
